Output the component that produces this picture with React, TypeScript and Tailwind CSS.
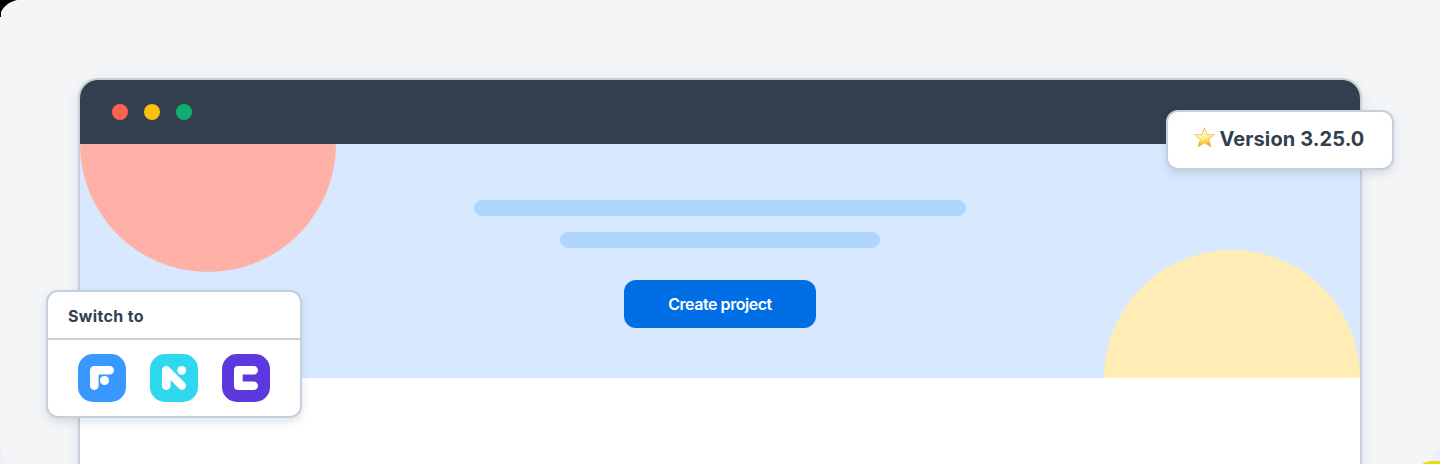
import React from "react";

function Tile({ color, children }: { color: string; children: React.ReactNode }) {
  return (
    <svg viewBox="0 0 48 48" className="h-12 w-12">
      <rect width="48" height="48" rx="15" fill={color} />
      {children}
    </svg>
  );
}

function Star() {
  return (
    <svg viewBox="0 0 20 20" className="-mt-[5px] h-[21px] w-[21px] shrink-0">
      <defs>
        <linearGradient id="starFill" x1="0" y1="0" x2="0.15" y2="1">
          <stop offset="0.1" stopColor="#fffbe8" />
          <stop offset="0.5" stopColor="#fff6ae" />
          <stop offset="0.75" stopColor="#fddc4e" />
          <stop offset="1" stopColor="#f3ab22" />
        </linearGradient>
        <linearGradient id="starEdge" x1="0" y1="0" x2="0" y2="1">
          <stop offset="0" stopColor="#ecb45c" />
          <stop offset="0.45" stopColor="#f5c95c" />
          <stop offset="1" stopColor="#eda022" />
        </linearGradient>
      </defs>
      <path
        d="M10 .7 12.4 7.2 19.4 7.4 13.9 11.8 15.9 18.6 10 14.8 4.1 18.6 6.1 11.8 .6 7.4 7.6 7.2Z"
        fill="url(#starFill)"
        stroke="url(#starEdge)"
        strokeWidth="0.9"
        strokeLinejoin="round"
      />
    </svg>
  );
}

export default function App() {
  return (
    <div className="relative h-[464px] w-[1440px] overflow-hidden bg-[#f4f5f7] px-[78px] pt-[78px] font-['Inter',sans-serif] text-[#323f4e]">
      <svg viewBox="0 0 18 18" className="absolute left-0 top-0 h-[18px] w-[18px]">
        <path d="M0 0H17C10 1.5 4 6 1 12V17H0Z" fill="#000" />
      </svg>
      <svg viewBox="0 0 18 40" className="absolute bottom-0 right-0 h-10 w-[18px]">
        <path d="M18 18C17 27 13 33 8 37L0 40H18Z" fill="#eeedfb" />
        <path d="M0 40 4 38 9 37H18V40Z" fill="#e2dc0b" />
      </svg>
      <svg viewBox="0 0 12 22" className="absolute bottom-0 left-0 h-[22px] w-3">
        <path d="M0 0C1 8 2 12 4 15V22H0Z" fill="#efeffc" />
      </svg>

      <div className="h-[420px] overflow-hidden rounded-[20px] border-2 border-[#c5d0dd] bg-white shadow-[0_4px_12px_rgba(50,63,78,0.12)]">
        <div className="flex h-16 items-center gap-4 bg-[#323f4e] px-8">
          <span className="h-4 w-4 rounded-full bg-[#ff6250]" />
          <span className="h-4 w-4 rounded-full bg-[#ffbf0f]" />
          <span className="h-4 w-4 rounded-full bg-[#0fae6c]" />
        </div>
        <div className="flex h-[234px] justify-between bg-[#d8e9ff]">
          <div className="h-32 w-64 rounded-b-full bg-[#ffb0a7]" />
          <div className="flex flex-col items-center pt-14">
            <div className="h-4 w-[492px] rounded-full bg-[#aed6ff]" />
            <div className="mt-4 h-4 w-80 rounded-full bg-[#aed6ff]" />
            <button className="mt-8 flex h-12 w-48 items-center justify-center rounded-xl bg-[#006fe6] text-base font-semibold tracking-[-0.45px] text-white">
              Create project
            </button>
          </div>
          <div className="h-32 w-64 self-end rounded-t-full bg-[#ffedb5]" />
        </div>
      </div>

      <div className="absolute left-[1166px] top-[110px] flex h-[60px] w-[228px] items-center rounded-xl border-2 border-[#c5d0dd] bg-white pl-[25.5px] shadow-[0_4px_8px_rgba(50,63,78,0.14)]">
        <Star />
        <span className="-mt-0.5 ml-[5px] whitespace-nowrap text-xl font-bold leading-7 tracking-[0.1px]">Version 3.25.0</span>
      </div>

      <div className="absolute left-[46px] top-[290px] h-32 w-64 rounded-xl border-2 border-[#c5d0dd] bg-white shadow-[0_4px_8px_rgba(50,63,78,0.14)]">
        <div className="flex h-12 items-center border-b-2 border-[#c5d0dd] px-5 pt-0.5 text-base font-bold tracking-[0.35px]">Switch to</div>
        <div className="flex justify-center gap-6 pt-3.5">
          <Tile color="#3998ff">
            <path d="M16.3 12H31.7A4.3 4.3 0 0 1 31.7 20.6H21.8A1.3 1.3 0 0 0 20.6 21.8V31.7A4.3 4.3 0 0 1 12 31.7V16.3A4.3 4.3 0 0 1 16.3 12Z" fill="#fff" />
            <circle cx="26.5" cy="26.5" r="4.5" fill="#fff" />
          </Tile>
          <Tile color="#30d8ef">
            <path d="M12 31.8V16.3C12 12.3 16.7 10.7 19.4 13.4L34.8 28.7C38.5 32.6 33 38.3 29 34.6L20.6 26.3V31.8A4.3 4.3 0 0 1 12 31.8Z" fill="#fff" />
            <circle cx="31.7" cy="16.3" r="4.4" fill="#fff" />
          </Tile>
          <Tile color="#5e38df">
            <path d="M16 12H31.7A4.3 4.3 0 0 1 31.7 20.6H20.7V27.4H31.7A4.3 4.3 0 0 1 31.7 36H16A4 4 0 0 1 12 32V16A4 4 0 0 1 16 12Z" fill="#fff" />
          </Tile>
        </div>
      </div>
    </div>
  );
}
